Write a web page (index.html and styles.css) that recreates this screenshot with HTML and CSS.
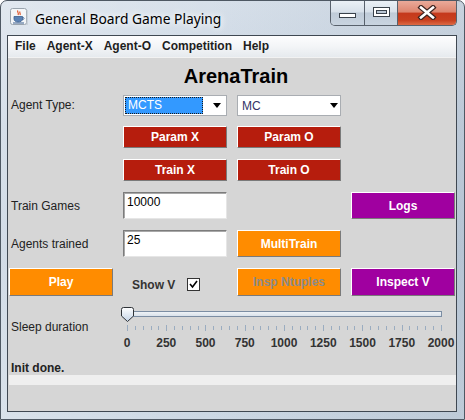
FILE: index.html
```html
<!DOCTYPE html>
<html>
<head>
<meta charset="utf-8">
<title>General Board Game Playing</title>
<link rel="stylesheet" href="styles.css">
</head>
<body>
<div class="window">
  <div class="titlebar">
    <svg class="app-icon" width="18" height="18" viewBox="0 0 18 18">
      <rect x="0.5" y="0.5" width="16" height="16" rx="2" fill="#f4f6f8" stroke="#9aa4ae"/>
      <rect x="16.5" y="2" width="1" height="15" fill="#b8c0c8"/>
      <path d="M8 2.5 C6.5 4 9.5 5 8 7 M10 3.5 C9 5 11 5.5 10 7" fill="none" stroke="#e2562a" stroke-width="1.2"/>
      <path d="M4 8.5 H12.5 V11 C12.5 13 10.5 14 8.2 14 C6 14 4 13 4 11 Z" fill="#5b82b4" stroke="#3b5f8e" stroke-width="0.8"/>
      <path d="M12.5 9.2 C14.5 9.2 14.5 11.8 12.3 11.6" fill="none" stroke="#3b5f8e" stroke-width="0.9"/>
      <path d="M3 15 H14" stroke="#3b5f8e" stroke-width="1"/>
    </svg>
    <span class="title">General Board Game Playing</span>
    <div class="winbtns">
      <div class="wb wb-min">
        <svg width="17" height="6" viewBox="0 0 17 6"><rect x="0.5" y="0.5" width="16" height="4" fill="#fff" stroke="#3a424b"/></svg>
      </div>
      <div class="wb wb-max">
        <svg width="17" height="11" viewBox="0 0 17 11"><rect x="0.5" y="0.5" width="16" height="9" fill="#fff" stroke="#3a424b"/><rect x="3.5" y="3.5" width="10" height="3" fill="#b9c6d4" stroke="#3a424b"/></svg>
      </div>
      <div class="wb wb-close">
        <svg width="20" height="15" viewBox="0 0 20 15"><path d="M4 2.5 L16 12.5 M16 2.5 L4 12.5" stroke="#3d2420" stroke-width="5" stroke-linecap="square"/><path d="M4 2.5 L16 12.5 M16 2.5 L4 12.5" stroke="#fff" stroke-width="2.6" stroke-linecap="square"/></svg>
      </div>
    </div>
  </div>
  <div class="client">
    <div class="menubar">
      <span class="menu">File</span>
      <span class="menu">Agent-X</span>
      <span class="menu">Agent-O</span>
      <span class="menu">Competition</span>
      <span class="menu">Help</span>
    </div>
    <div class="content">
      <div class="heading">ArenaTrain</div>
      <div class="form">
        <div class="label r1 c1">Agent Type:</div>
        <div class="combo r1 c2"><span class="combo-sel">MCTS</span><span class="arrow"></span></div>
        <div class="combo r1 c3"><span class="combo-val">MC</span><span class="arrow"></span></div>

        <div class="btn red r2 c2">Param X</div>
        <div class="btn red r2 c3">Param O</div>
        <div class="btn red r3 c2">Train X</div>
        <div class="btn red r3 c3">Train O</div>

        <div class="label r4 c1">Train Games</div>
        <div class="field r4 c2">10000</div>
        <div class="btn purple r4 c4">Logs</div>

        <div class="label r5 c1">Agents trained</div>
        <div class="field r5 c2">25</div>
        <div class="btn orange r5 c3">MultiTrain</div>

        <div class="btn orange r6 c1">Play</div>
        <div class="showv r6 c2"><span>Show V</span>
          <svg class="check" width="13" height="13" viewBox="0 0 13 13"><rect x="0.5" y="0.5" width="12" height="12" fill="#fff" stroke="#333"/><path d="M3 6 L5.5 9 L10 3" fill="none" stroke="#000" stroke-width="1.6"/></svg>
        </div>
        <div class="btn orange disabled r6 c3">Insp Ntuples</div>
        <div class="btn purple r6 c4">Inspect V</div>
      </div>
      <div class="slider-row">
        <div class="slider-label">Sleep duration</div>
        <div class="slider">
          <div class="slider-top">
            <div class="track"></div>
            <svg class="thumb" width="15" height="17" viewBox="0 0 15 17">
              <defs><linearGradient id="tg" x1="0" y1="0" x2="0" y2="1"><stop offset="0" stop-color="#ffffff"/><stop offset="1" stop-color="#c3d3e6"/></linearGradient></defs>
              <path d="M1.5 3.5 Q1.5 1.5 3.5 1.5 H11.5 Q13.5 1.5 13.5 3.5 V10 L7.5 15.5 L1.5 10 Z" fill="url(#tg)" stroke="#2f3338"/>
            </svg>
          </div>
          <div class="ticks">
            <i class="tick major"></i><i class="tick"></i><i class="tick"></i><i class="tick"></i><i class="tick"></i>
            <i class="tick major"></i><i class="tick"></i><i class="tick"></i><i class="tick"></i><i class="tick"></i>
            <i class="tick major"></i><i class="tick"></i><i class="tick"></i><i class="tick"></i><i class="tick"></i>
            <i class="tick major"></i><i class="tick"></i><i class="tick"></i><i class="tick"></i><i class="tick"></i>
            <i class="tick major"></i><i class="tick"></i><i class="tick"></i><i class="tick"></i><i class="tick"></i>
            <i class="tick major"></i><i class="tick"></i><i class="tick"></i><i class="tick"></i><i class="tick"></i>
            <i class="tick major"></i><i class="tick"></i><i class="tick"></i><i class="tick"></i><i class="tick"></i>
            <i class="tick major"></i><i class="tick"></i><i class="tick"></i><i class="tick"></i><i class="tick"></i>
            <i class="tick major"></i>
          </div>
          <div class="scale">
            <span>0</span><span>250</span><span>500</span><span>750</span><span>1000</span><span>1250</span><span>1500</span><span>1750</span><span>2000</span>
          </div>
        </div>
      </div>
      <div class="status">Init done.</div>
      <div class="strip"></div>
    </div>
  </div>
</div>
</body>
</html>
```

FILE: styles.css
```css
html, body {
  margin: 0;
  padding: 0;
  background: #ffffff;
}
body {
  font-family: "Liberation Sans", Arial, sans-serif;
  font-size: 12px;
}
.window {
  width: 465px;
  height: 420px;
  box-sizing: border-box;
  border: 1px solid #4e5863;
  border-radius: 7px 7px 0 0;
  padding: 0 7px 7px 6px;
  display: flex;
  flex-direction: column;
  background: linear-gradient(90deg, rgba(255,255,255,0.25) 0%, rgba(255,255,255,0) 45%, rgba(90,110,135,0.12) 100%),
              linear-gradient(180deg, #d7e0ea 0%, #c9d5e2 30%, #c3d0de 60%, #ccd8e4 100%);
}
.titlebar {
  height: 34px;
  display: flex;
  align-items: flex-start;
  flex-shrink: 0;
}
.app-icon {
  margin: 7px 0 0 3px;
  flex-shrink: 0;
}
.title {
  margin: 8px 0 0 7px;
  font-family: "Noto Sans", "Open Sans", sans-serif;
  font-size: 13.8px;
  line-height: 20px;
  color: #000;
  text-shadow: 0 0 6px #fff, 0 0 10px #fff;
}
.winbtns {
  margin-left: auto;
  display: flex;
  height: 25px;
  box-sizing: border-box;
  border: 1px solid #58616c;
  border-top: none;
  border-radius: 0 0 5px 5px;
  overflow: hidden;
}
.wb {
  display: flex;
  align-items: center;
  justify-content: center;
}
.wb svg { display: block; }
.wb-min {
  width: 34px;
  border-right: 1px solid #58616c;
  background: linear-gradient(180deg, #eaf0f6 0%, #d8e1ea 45%, #bfcbd8 50%, #c9d4e0 100%);
  padding-top: 6px;
  box-sizing: border-box;
}
.wb-max {
  width: 33px;
  border-right: 1px solid #58616c;
  background: linear-gradient(180deg, #eaf0f6 0%, #d8e1ea 45%, #bfcbd8 50%, #c9d4e0 100%);
  padding-bottom: 2px;
  box-sizing: border-box;
}
.wb-close {
  width: 58px;
  background: linear-gradient(180deg, #e9aa9a 0%, #dd8670 45%, #c5391c 52%, #c8401f 80%, #dd6a45 100%);
  padding-bottom: 1px;
  box-sizing: border-box;
}
.client {
  flex: 1;
  border: 1px solid #3f4852;
  background: #d6d6d6;
  display: flex;
  flex-direction: column;
}
.menubar {
  height: 21px;
  flex-shrink: 0;
  border-bottom: 1px solid #f2f2f2;
  background: linear-gradient(180deg, #fdfdfe 0%, #f3f5f7 50%, #e6eaee 100%);
  display: flex;
  gap: 11px;
  padding-left: 7px;
}
.menu {
  font-weight: bold;
  font-size: 12px;
  line-height: 21px;
  color: #1e1e1e;
}
.content {
  flex: 1;
  display: flex;
  flex-direction: column;
}
.heading {
  margin: 6px 0 6px 0;
  padding-left: 8px;
  text-align: center;
  font-weight: bold;
  font-size: 20px;
  line-height: 24px;
  color: #000;
}
.form {
  margin-left: 1px;
  display: grid;
  grid-template-columns: 104px 104px 104px 104px;
  grid-template-rows: 21px 22px 22px 27px 27px 28px;
  column-gap: 10px;
  row-gap: 11px;
}
.r1 { grid-row: 1; }
.r2 { grid-row: 2; }
.r3 { grid-row: 3; }
.r4 { grid-row: 4; }
.r5 { grid-row: 5; }
.r6 { grid-row: 6; }
.c1 { grid-column: 1; }
.c2 { grid-column: 2; }
.c3 { grid-column: 3; }
.c4 { grid-column: 4; }
.label {
  padding-left: 2px;
  display: flex;
  align-items: center;
  color: #222;
  font-size: 12px;
}
.combo {
  margin-top: 1px;
  height: 21px;
  box-sizing: border-box;
  border: 1px solid #a9adb2;
  background: #fff;
  display: flex;
  align-items: center;
  padding: 1px;
}
.combo-sel {
  width: 78px;
  height: 17px;
  box-sizing: border-box;
  border: 1px dotted #1a1a1a;
  background: #3399ff;
  color: #fff;
  font-size: 12px;
  line-height: 15px;
  padding-left: 2px;
}
.combo-val {
  width: 78px;
  color: #333366;
  font-size: 12px;
  padding-left: 3px;
}
.arrow {
  margin-left: 10px;
  width: 0;
  height: 0;
  border-left: 4px solid transparent;
  border-right: 4px solid transparent;
  border-top: 5px solid #000;
}
.btn {
  box-sizing: border-box;
  border: 1px solid;
  border-color: #ffffff #7a7a7a #7a7a7a #ffffff;
  display: flex;
  align-items: center;
  justify-content: center;
  color: #fff;
  font-weight: bold;
  font-size: 12px;
}
.red { background: #b61d0d; }
.orange { background: #ff8c00; }
.purple { background: #a000a0; }
.disabled { color: #8b8b8b; }
.field {
  box-sizing: border-box;
  border: 1px solid;
  border-color: #7c7c7c #e6e6e6 #e6e6e6 #7c7c7c;
  box-shadow: inset 1px 1px 0 #a8a8a8;
  background: #fff;
  padding: 2px 0 0 3px;
  font-size: 12px;
  line-height: 15px;
  color: #000;
}
.showv {
  display: flex;
  align-items: center;
  padding: 5px 0 0 9px;
  gap: 12px;
  font-weight: bold;
  color: #333;
}
.check { display: block; }
.slider-row {
  margin-top: 9px;
  display: flex;
}
.slider-label {
  width: 112px;
  padding-left: 3px;
  margin-top: 15px;
  line-height: 14px;
  font-size: 12px;
  color: #222;
}
.slider {
  width: 332px;
}
.slider-top {
  position: relative;
  height: 14px;
  padding-top: 6px;
}
.track {
  margin-left: 4px;
  width: 315px;
  height: 6px;
  box-sizing: border-box;
  border: 1px solid #7b8da3;
  background: linear-gradient(180deg, #eef2f6, #d9e1ea);
}
.thumb {
  position: absolute;
  left: -3px;
  top: 1px;
}
.ticks {
  margin-left: 4px;
  width: 315px;
  height: 6px;
  display: flex;
  justify-content: space-between;
  align-items: center;
}
.tick {
  display: block;
  width: 1px;
  height: 4px;
  background: #9aacc0;
}
.tick.major { height: 6px; }
.scale {
  margin: 5px 0 0 -15.6px;
  display: grid;
  grid-template-columns: repeat(9, 39.25px);
  font-weight: bold;
  font-size: 12px;
  line-height: 14px;
  color: #333;
  text-align: center;
}
.status {
  margin-top: 11px;
  padding-left: 3px;
  font-weight: bold;
  font-size: 12px;
  line-height: 14px;
  color: #222;
}
.strip {
  margin-left: 1px;
  height: 10px;
  background: #efefef;
}
```
